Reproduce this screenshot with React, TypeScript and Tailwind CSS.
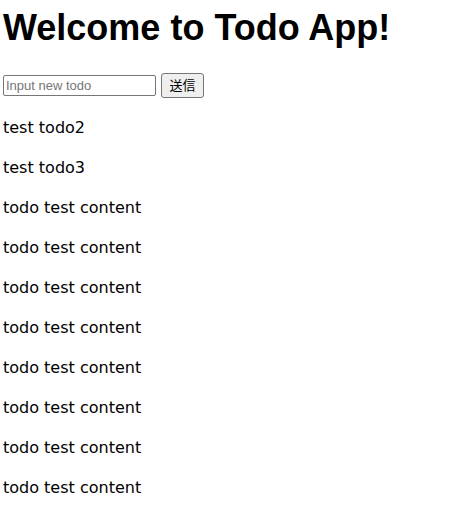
import React, { useState } from "react";

const initialTodos = [
  "test todo2",
  "test todo3",
  "todo test content",
  "todo test content",
  "todo test content",
  "todo test content",
  "todo test content",
  "todo test content",
  "todo test content",
  "todo test content",
];

const App = () => {
  const [todos, setTodos] = useState<string[]>(initialTodos);
  const [text, setText] = useState("");

  const handleSubmit = (e: React.FormEvent) => {
    e.preventDefault();
    if (!text) return;
    setTodos([...todos, text]);
    setText("");
  };

  return (
    <div className="min-h-screen bg-white px-[3px] pt-[8px] text-black font-['Liberation_Sans','Noto_Sans_CJK_JP',sans-serif]">
      <h1 className="text-4xl font-bold leading-10">Welcome to Todo App!</h1>

      {/* Form */}
      <form onSubmit={handleSubmit} className="mt-[25px] flex items-center gap-[5px]">
        <input
          type="text"
          placeholder="Input new todo"
          value={text}
          onChange={(e) => setText(e.target.value)}
          className="w-[153px] h-[21px] px-[2px] border border-[#767676] rounded-[2px] text-[13px] placeholder:text-[#757575] focus:outline-none"
        />
        <button
          type="submit"
          className="h-[25px] w-[43px] border border-[#767676] rounded-[3px] bg-[#efefef] text-[13px]"
        >
          送信
        </button>
      </form>

      {/* Todo list */}
      <div className="pt-[2px] font-['DejaVu_Sans',sans-serif]">
        {todos.map((todo, i) => (
          <p key={i} className="my-4 text-base leading-6">
            {todo}
          </p>
        ))}
      </div>
    </div>
  );
};

export default App;
